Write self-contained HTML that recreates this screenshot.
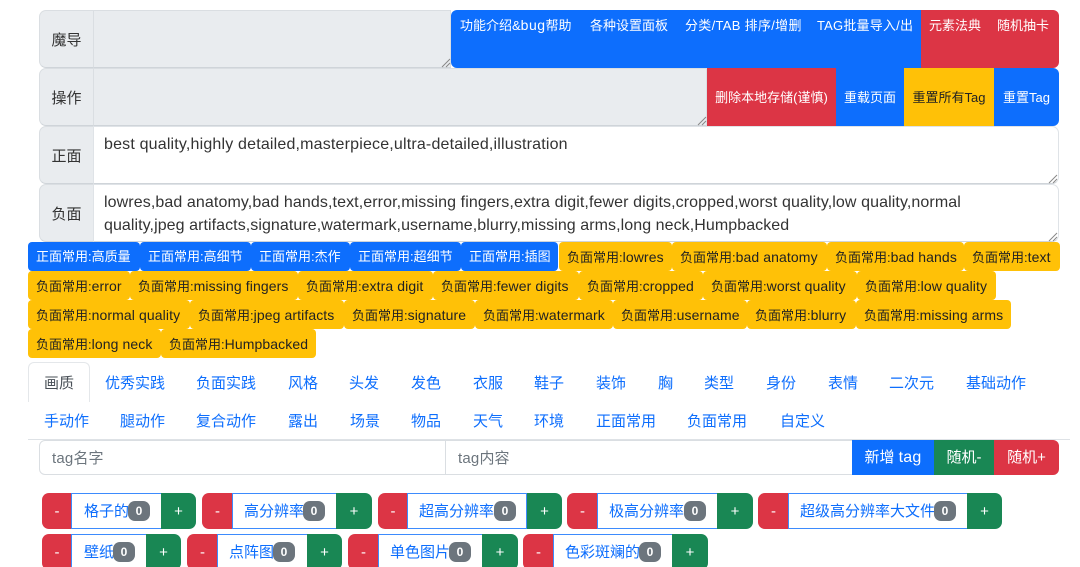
<!DOCTYPE html>
<html lang="zh"><head><meta charset="utf-8"><title>Tag</title>
<style>
html,body{margin:0;padding:0;background:#fff;width:1080px;height:567px;overflow:hidden}
body{position:relative;font-family:"Liberation Sans","Noto Sans CJK SC",sans-serif;color:#212529}
div,a,span{position:absolute;box-sizing:border-box;white-space:nowrap}
i{font-style:normal;font-size:14px;letter-spacing:.1px}
.l{left:39px;width:55px;height:58px;background:#e9ecef;border:1px solid #dadee2;border-bottom-color:#cfd4d9;border-radius:7px 0 0 7px;font-size:15px;text-align:center;line-height:59px;color:#333}
.ta{left:93px;height:58px;border:1px solid #dadee2;border-bottom-color:#cfd4d9;background:#e9ecef}
.w{background:#fff;border-color:#dfe3e7;border-bottom-color:#cfd4d9;border-radius:0 7px 7px 0}
.t{font-size:16px;line-height:23px;color:#333;left:104px}
.b{top:10px;height:58px;color:#fff;font-size:13px;text-align:center}
.c{line-height:59px}
.x{line-height:31px}
.bl{background:#0d6efd}.rd{background:#dc3545}.gn{background:#198754}.yl{background:#ffc107}
.tg{height:29px;border-radius:4px;font-size:13px;line-height:30px;padding-left:8px}
.tg.bl{color:#fff}.tg.yl{color:#222}
.tab{font-size:15px;color:#0d6efd;height:24px;line-height:26px}
.gr{height:36px;line-height:38px;text-align:center;color:#fff;font-size:15px}
.lb{height:36px;background:#fff;border:1px solid #3d8bfd}
.gt{font-size:15px;color:#0d6efd;height:36px;line-height:37px}
.bd{width:22px;height:20px;background:#6c757d;border-radius:7px;color:#fff;font-size:12px;font-weight:bold;text-align:center;line-height:20px}
svg{position:absolute}
</style></head><body>

<div class="l" style="top:10px">魔导</div>
<div class="ta" style="top:10px;width:358px"></div>
<svg style="left:441px;top:58px" width="10" height="10"><path d="M1 9L9 1M5 9L9 5" stroke="#888" stroke-width="1"/></svg>
<div class="b bl x" style="left:451px;width:471px;border-radius:6px 0 0 6px"></div>
<div class="b rd x" style="left:921px;width:138px;border-radius:0 6px 6px 0"></div>
<span class="b x" style="left:460px;height:30px">功能介绍&amp;<i style="letter-spacing:.5px">bug</i>帮助</span>
<span class="b x" style="left:590px;height:30px">各种设置面板</span>
<span class="b x" style="left:685px;height:30px;letter-spacing:.3px">分类/TAB 排序/增删</span>
<span class="b x" style="left:817px;height:30px;letter-spacing:.2px">TAG批量导入/出</span>
<span class="b x" style="left:929px;height:30px">元素法典</span>
<span class="b x" style="left:997px;height:30px">随机抽卡</span>

<div class="l" style="top:68px">操作</div>
<div class="ta" style="top:68px;width:614px"></div>
<svg style="left:697px;top:116px" width="10" height="10"><path d="M1 9L9 1M5 9L9 5" stroke="#888" stroke-width="1"/></svg>
<div class="b rd c" style="top:68px;left:707px;width:129px">删除本地存储(谨慎)</div>
<div class="b bl c" style="top:68px;left:836px;width:68px">重载页面</div>
<div class="b yl c" style="top:68px;left:904px;width:90px;color:#222">重置所有Tag</div>
<div class="b bl c" style="top:68px;left:994px;width:65px;border-radius:0 6px 6px 0">重置Tag</div>

<div class="l" style="top:126px">正面</div>
<div class="ta w" style="top:126px;width:966px"></div>
<div class="t" style="top:133px;letter-spacing:.18px">best quality,highly detailed,masterpiece,ultra-detailed,illustration</div>
<svg style="left:1048px;top:174px" width="10" height="10"><path d="M1 9L9 1M5 9L9 5" stroke="#888" stroke-width="1"/></svg>

<div class="l" style="top:184px">负面</div>
<div class="ta w" style="top:184px;width:966px"></div>
<div class="t" style="top:191px;letter-spacing:.1px">lowres,bad anatomy,bad hands,text,error,missing fingers,extra digit,fewer digits,cropped,worst quality,low quality,normal</div>
<div class="t" style="top:214px;letter-spacing:.07px">quality,jpeg artifacts,signature,watermark,username,blurry,missing arms,long neck,Humpbacked</div>
<svg style="left:1048px;top:232px" width="10" height="10"><path d="M1 9L9 1M5 9L9 5" stroke="#888" stroke-width="1"/></svg>

<div class="tg bl" style="top:242px;left:28px;width:112px">正面常用:高质量</div>
<div class="tg bl" style="top:242px;left:140px;width:111px">正面常用:高细节</div>
<div class="tg bl" style="top:242px;left:251px;width:99px">正面常用:杰作</div>
<div class="tg bl" style="top:242px;left:350px;width:111px">正面常用:超细节</div>
<div class="tg bl" style="top:242px;left:461px;width:97px">正面常用:插图</div>
<div class="tg yl" style="top:242px;left:559px;width:113px">负面常用:<i>lowres</i></div>
<div class="tg yl" style="top:242px;left:672px;width:155px">负面常用:<i>bad anatomy</i></div>
<div class="tg yl" style="top:242px;left:827px;width:137px">负面常用:<i>bad hands</i></div>
<div class="tg yl" style="top:242px;left:964px;width:96px">负面常用:<i>text</i></div>

<div class="tg yl" style="top:271px;left:28px;width:102px">负面常用:<i>error</i></div>
<div class="tg yl" style="top:271px;left:130px;width:168px">负面常用:<i>missing fingers</i></div>
<div class="tg yl" style="top:271px;left:298px;width:135px">负面常用:<i>extra digit</i></div>
<div class="tg yl" style="top:271px;left:433px;width:146px">负面常用:<i>fewer digits</i></div>
<div class="tg yl" style="top:271px;left:579px;width:124px">负面常用:<i>cropped</i></div>
<div class="tg yl" style="top:271px;left:703px;width:154px">负面常用:<i>worst quality</i></div>
<div class="tg yl" style="top:271px;left:857px;width:139px">负面常用:<i>low quality</i></div>

<div class="tg yl" style="top:300px;left:28px;width:162px">负面常用:<i>normal quality</i></div>
<div class="tg yl" style="top:300px;left:190px;width:154px">负面常用:<i>jpeg artifacts</i></div>
<div class="tg yl" style="top:300px;left:344px;width:131px">负面常用:<i>signature</i></div>
<div class="tg yl" style="top:300px;left:475px;width:138px">负面常用:<i>watermark</i></div>
<div class="tg yl" style="top:300px;left:613px;width:134px">负面常用:<i>username</i></div>
<div class="tg yl" style="top:300px;left:747px;width:109px">负面常用:<i>blurry</i></div>
<div class="tg yl" style="top:300px;left:856px;width:155px">负面常用:<i>missing arms</i></div>

<div class="tg yl" style="top:329px;left:28px;width:133px">负面常用:<i>long neck</i></div>
<div class="tg yl" style="top:329px;left:161px;width:155px">负面常用:<i>Humpbacked</i></div>

<div style="left:28px;top:362px;width:62px;height:40px;border:1px solid #e4e7ea;border-bottom:0;border-radius:6px 6px 0 0"></div>
<span class="tab" style="left:44px;top:371px;color:#495057">画质</span>
<span class="tab" style="left:105px;top:371px">优秀实践</span>
<span class="tab" style="left:196px;top:371px">负面实践</span>
<span class="tab" style="left:288px;top:371px">风格</span>
<span class="tab" style="left:349px;top:371px">头发</span>
<span class="tab" style="left:411px;top:371px">发色</span>
<span class="tab" style="left:473px;top:371px">衣服</span>
<span class="tab" style="left:534px;top:371px">鞋子</span>
<span class="tab" style="left:596px;top:371px">装饰</span>
<span class="tab" style="left:658px;top:371px">胸</span>
<span class="tab" style="left:704px;top:371px">类型</span>
<span class="tab" style="left:766px;top:371px">身份</span>
<span class="tab" style="left:828px;top:371px">表情</span>
<span class="tab" style="left:889px;top:371px">二次元</span>
<span class="tab" style="left:966px;top:371px">基础动作</span>

<span class="tab" style="left:44px;top:409px">手动作</span>
<span class="tab" style="left:120px;top:409px">腿动作</span>
<span class="tab" style="left:196px;top:409px">复合动作</span>
<span class="tab" style="left:288px;top:409px">露出</span>
<span class="tab" style="left:350px;top:409px">场景</span>
<span class="tab" style="left:411px;top:409px">物品</span>
<span class="tab" style="left:473px;top:409px">天气</span>
<span class="tab" style="left:534px;top:409px">环境</span>
<span class="tab" style="left:596px;top:409px">正面常用</span>
<span class="tab" style="left:687px;top:409px">负面常用</span>
<span class="tab" style="left:780px;top:409px">自定义</span>
<div style="left:28px;top:439px;width:1042px;height:1px;background:#dee2e6"></div>

<div style="left:39px;top:440px;width:407px;height:35px;border:1px solid #dadee2;border-radius:6px 0 0 6px;font-size:15px;line-height:35px;padding-left:12px;color:#6c757d"><i style="font-size:15px;letter-spacing:.2px">tag</i>名字</div>
<div style="left:445px;top:440px;width:408px;height:35px;border:1px solid #dadee2;font-size:15px;line-height:35px;padding-left:12px;color:#6c757d"><i style="font-size:15px;letter-spacing:.2px">tag</i>内容</div>
<div class="bl" style="left:852px;top:440px;width:82px;height:35px;color:#fff;font-size:15px;line-height:36px;text-align:center">新增 <i style="font-size:16px;letter-spacing:.2px">tag</i></div>
<div class="gn" style="left:934px;top:440px;width:60px;height:35px;color:#fff;font-size:15px;line-height:36px;text-align:center">随机-</div>
<div class="rd" style="left:994px;top:440px;width:65px;height:35px;color:#fff;font-size:15px;line-height:36px;text-align:center;border-radius:0 6px 6px 0">随机+</div>

<div class="gr rd" style="left:42px;top:493px;width:30px;border-radius:7px 0 0 7px">-</div>
<div class="lb" style="left:71px;top:493px;width:91px"></div>
<span class="gt" style="left:84px;top:493px">格子的</span><div class="bd" style="left:128px;top:501px">0</div>
<div class="gr gn" style="left:161px;top:493px;width:35px;border-radius:0 7px 7px 0">+</div>

<div class="gr rd" style="left:202px;top:493px;width:31px;border-radius:7px 0 0 7px">-</div>
<div class="lb" style="left:232px;top:493px;width:105px"></div>
<span class="gt" style="left:244px;top:493px">高分辨率</span><div class="bd" style="left:303px;top:501px">0</div>
<div class="gr gn" style="left:336px;top:493px;width:36px;border-radius:0 7px 7px 0">+</div>

<div class="gr rd" style="left:378px;top:493px;width:30px;border-radius:7px 0 0 7px">-</div>
<div class="lb" style="left:407px;top:493px;width:120px"></div>
<span class="gt" style="left:419px;top:493px">超高分辨率</span><div class="bd" style="left:494px;top:501px">0</div>
<div class="gr gn" style="left:527px;top:493px;width:35px;border-radius:0 7px 7px 0">+</div>

<div class="gr rd" style="left:567px;top:493px;width:31px;border-radius:7px 0 0 7px">-</div>
<div class="lb" style="left:597px;top:493px;width:121px"></div>
<span class="gt" style="left:609px;top:493px">极高分辨率</span><div class="bd" style="left:684px;top:501px">0</div>
<div class="gr gn" style="left:717px;top:493px;width:36px;border-radius:0 7px 7px 0">+</div>

<div class="gr rd" style="left:758px;top:493px;width:31px;border-radius:7px 0 0 7px">-</div>
<div class="lb" style="left:788px;top:493px;width:180px"></div>
<span class="gt" style="left:800px;top:493px">超级高分辨率大文件</span><div class="bd" style="left:934px;top:501px">0</div>
<div class="gr gn" style="left:967px;top:493px;width:35px;border-radius:0 7px 7px 0">+</div>

<div class="gr rd" style="left:42px;top:534px;width:30px;border-radius:7px 0 0 7px">-</div>
<div class="lb" style="left:71px;top:534px;width:76px"></div>
<span class="gt" style="left:84px;top:534px">壁纸</span><div class="bd" style="left:113px;top:542px">0</div>
<div class="gr gn" style="left:146px;top:534px;width:35px;border-radius:0 7px 7px 0">+</div>

<div class="gr rd" style="left:187px;top:534px;width:31px;border-radius:7px 0 0 7px">-</div>
<div class="lb" style="left:217px;top:534px;width:91px"></div>
<span class="gt" style="left:229px;top:534px">点阵图</span><div class="bd" style="left:273px;top:542px">0</div>
<div class="gr gn" style="left:307px;top:534px;width:35px;border-radius:0 7px 7px 0">+</div>

<div class="gr rd" style="left:348px;top:534px;width:31px;border-radius:7px 0 0 7px">-</div>
<div class="lb" style="left:378px;top:534px;width:105px"></div>
<span class="gt" style="left:390px;top:534px">单色图片</span><div class="bd" style="left:449px;top:542px">0</div>
<div class="gr gn" style="left:482px;top:534px;width:36px;border-radius:0 7px 7px 0">+</div>

<div class="gr rd" style="left:523px;top:534px;width:31px;border-radius:7px 0 0 7px">-</div>
<div class="lb" style="left:553px;top:534px;width:120px"></div>
<span class="gt" style="left:565px;top:534px">色彩斑斓的</span><div class="bd" style="left:639px;top:542px">0</div>
<div class="gr gn" style="left:672px;top:534px;width:36px;border-radius:0 7px 7px 0">+</div>

</body></html>
